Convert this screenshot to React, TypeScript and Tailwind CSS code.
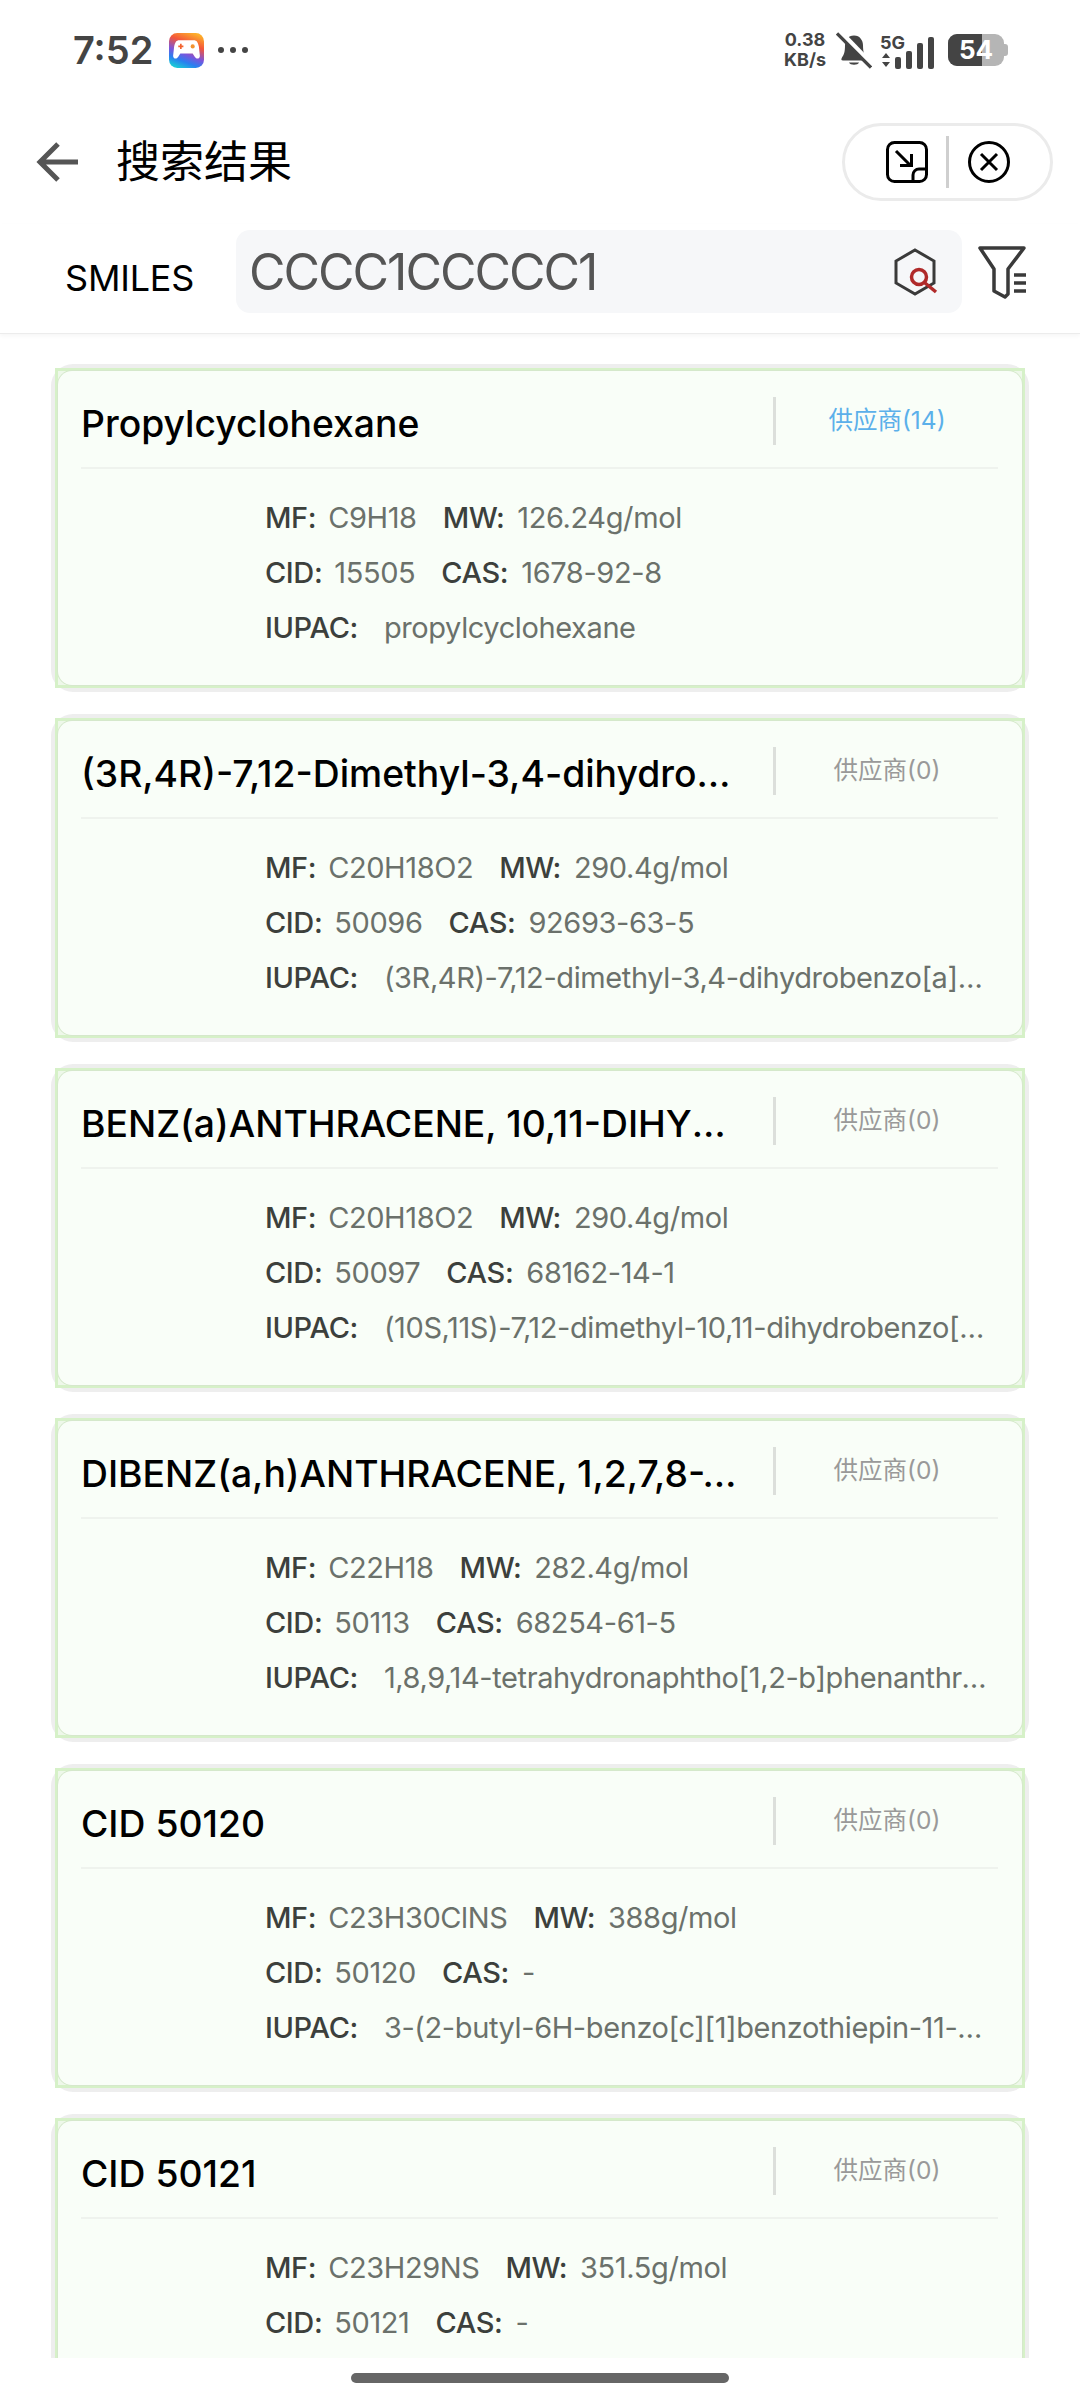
const FONT = "font-['Inter','Noto_Sans_CJK_SC',sans-serif]";

type Compound = {
  name: string;
  suppliers: number;
  mf: string;
  mw: string;
  cid: string;
  cas: string;
  iupac: string;
};

const compounds: Compound[] = [
  { name: "Propylcyclohexane", suppliers: 14, mf: "C9H18", mw: "126.24g/mol", cid: "15505", cas: "1678-92-8", iupac: "propylcyclohexane" },
  { name: "(3R,4R)-7,12-Dimethyl-3,4-dihydrobenzo[a]anthracene-3,4-diol", suppliers: 0, mf: "C20H18O2", mw: "290.4g/mol", cid: "50096", cas: "92693-63-5", iupac: "(3R,4R)-7,12-dimethyl-3,4-dihydrobenzo[a]anthracene-3,4-diol" },
  { name: "BENZ(a)ANTHRACENE, 10,11-DIHYDRO-7,12-DIMETHYL", suppliers: 0, mf: "C20H18O2", mw: "290.4g/mol", cid: "50097", cas: "68162-14-1", iupac: "(10S,11S)-7,12-dimethyl-10,11-dihydrobenzo[a]anthracene-10,11-diol" },
  { name: "DIBENZ(a,h)ANTHRACENE, 1,2,7,8-TETRAHYDRO", suppliers: 0, mf: "C22H18", mw: "282.4g/mol", cid: "50113", cas: "68254-61-5", iupac: "1,8,9,14-tetrahydronaphtho[1,2-b]phenanthrene-1,2-diol" },
  { name: "CID 50120", suppliers: 0, mf: "C23H30ClNS", mw: "388g/mol", cid: "50120", cas: "-", iupac: "3-(2-butyl-6H-benzo[c][1]benzothiepin-11-ylidene)propan-1-amine" },
  { name: "CID 50121", suppliers: 0, mf: "C23H29NS", mw: "351.5g/mol", cid: "50121", cas: "-", iupac: "3-(2-butyl-6H-benzo[c][1]benzothiepin-11-yl)propan-1-amine" },
];

function StatusBar() {
  return (
    <div className="flex h-[100px] items-center justify-between pl-[73px] pr-[72px] text-[#444]">
      <div className="flex items-center">
        <span className="text-[38px] font-semibold leading-none">7:52</span>
        <svg viewBox="0 0 34 34" className="ml-[16px] h-[35px] w-[35px]">
          <defs>
            <linearGradient id="game" x1="0.7" y1="0" x2="0.3" y2="1">
              <stop offset="0" stopColor="#fdae2a" />
              <stop offset="0.3" stopColor="#f4563a" />
              <stop offset="0.6" stopColor="#7a55dc" />
              <stop offset="0.8" stopColor="#2a7ff0" />
              <stop offset="1" stopColor="#1cc6d8" />
            </linearGradient>
          </defs>
          <rect width="34" height="34" rx="8" fill="url(#game)" />
          <path d="M10 7h14c3 0 4 2 5 6l1 9c0 3-3 4-5 1l-2-3H11l-2 3c-2 3-5 2-5-1l1-9c1-4 2-6 5-6z" fill="#fff" />
          <path d="M9 13h5M11.500 10.500v5" stroke="#f2622e" strokeWidth="1.600" />
          <circle cx="23" cy="13" r="2" fill="#f2922e" />
        </svg>
        <div className="ml-[14px] flex gap-[6px]">
          <span className="h-[6px] w-[6px] rounded-full bg-[#444]" />
          <span className="h-[6px] w-[6px] rounded-full bg-[#444]" />
          <span className="h-[6px] w-[6px] rounded-full bg-[#444]" />
        </div>
      </div>
      <div className="flex items-center">
        <div className="flex flex-col items-center text-[18px] font-bold leading-[20px]">
          <span>0.38</span>
          <span>KB/s</span>
        </div>
        <svg viewBox="0 0 36 36" className="ml-[10px] h-[37px] w-[36px]">
          <path d="M18 3c-6 0-9 5-9 10 0 6-1 9-3 12-1 2-1 3 1 3h22c2 0 2-1 1-3-2-3-3-6-3-12 0-5-3-10-9-10z" fill="#444" />
          <path d="M13 30c1 3 9 3 10 0z" fill="#444" />
          <path d="M4 -1l33 34" stroke="#fff" strokeWidth="5" />
          <path d="M1 1l34 34" stroke="#444" strokeWidth="3.200" />
        </svg>
        <div className="ml-[8px] flex w-[25px] flex-col items-start">
          <span className="text-[18px] font-bold leading-[20px]">5G</span>
          <svg viewBox="0 0 10 14" className="ml-[1px] h-[14px] w-[10px]">
            <path d="M5 0l4 5H1zM5 14L1 9h8z" fill="#444" />
          </svg>
        </div>
        <div className="ml-[-10px] flex items-end gap-[5px] self-end pb-[1px]">
          <span className="h-[12px] w-[6px] rounded-[2px] bg-[#444]" />
          <span className="h-[18px] w-[6px] rounded-[2px] bg-[#444]" />
          <span className="h-[26px] w-[6px] rounded-[2px] bg-[#444]" />
          <span className="h-[32px] w-[6px] rounded-[2px] bg-[#444]" />
        </div>
        <div className="relative ml-[14px] h-[32px] w-[56px] overflow-hidden rounded-[9px] bg-[#b5b5b5]">
          <div className="h-full w-[34px] bg-[#444]" />
          <span className="absolute inset-0 flex items-center justify-center text-[26px] font-bold leading-none text-white">54</span>
        </div>
        <span className="h-[12px] w-[4px] rounded-r-[3px] bg-[#b5b5b5]" />
      </div>
    </div>
  );
}

function NavBar() {
  return (
    <div className="flex h-[124px] items-center justify-between pl-[36px] pr-[27px]">
      <div className="flex items-center">
        <svg viewBox="0 0 42 42" className="h-[42px] w-[42px]" fill="none" stroke="#555" strokeWidth="5">
          <path d="M42 21H4M22 3L4 21l18 18" />
        </svg>
        <h1 className="ml-[38px] text-[44px] font-normal leading-none text-black">搜索结果</h1>
      </div>
      <div className="flex h-[78px] w-[211px] items-center rounded-full border-[3px] border-[#ebebeb] pl-[41px]">
        <svg viewBox="0 0 42 42" className="h-[42px] w-[42px]" fill="none" stroke="#000" strokeWidth="3">
          <rect x="1.500" y="1.500" width="39" height="39" rx="7" />
          <path d="M10 10l15 15M14 24.500h11.500V13" />
          <path d="M27 40v-6a6 6 0 0 1 6-6h7.500" />
        </svg>
        <span className="ml-[18px] h-[52px] w-[3px] bg-[#cfcfcf]" />
        <svg viewBox="0 0 42 42" className="ml-[19px] h-[42px] w-[42px]" fill="none" stroke="#000" strokeWidth="3">
          <circle cx="21" cy="21" r="19.500" />
          <path d="M13 13l16 16M29 13L13 29" />
        </svg>
      </div>
    </div>
  );
}

function SearchRow() {
  return (
    <div className="flex h-[110px] items-start border-b border-[#ececec] pl-[65px] pt-[6px] shadow-[0_2px_4px_rgba(0,0,0,0.04)]">
      <span className="mt-[26px] w-[171px] text-[36px] leading-[44px] tracking-[-0.2px] text-black">SMILES</span>
      <div className="flex h-[83px] w-[726px] items-center justify-between rounded-[14px] bg-[#f6f7f9] pl-[13px] pr-[24px]">
        <span className="text-[50px] leading-none tracking-[-2px] text-[#555]">CCCC1CCCCC1</span>
        <svg viewBox="0 0 44 48" className="h-[48px] w-[44px]" fill="none">
          <path d="M21 2l19 11v22L21 46 2 35V13z" stroke="#3a3a3a" strokeWidth="3" />
          <circle cx="25" cy="29" r="7.500" stroke="#b02a2a" strokeWidth="3.500" />
          <path d="M31 35l11 9" stroke="#b02a2a" strokeWidth="3.500" />
        </svg>
      </div>
      <svg viewBox="0 0 50 54" className="ml-[15px] mt-[16px] h-[54px] w-[50px]" fill="none" stroke="#3a3a3a" strokeWidth="3.500">
        <path d="M3 2h44L31 23v25l-3 3-11-6V23z" strokeLinejoin="round" />
        <path d="M37 29h12M37 37h12M37 45h12" />
      </svg>
    </div>
  );
}

function CompoundCard({ item }: { item: Compound }) {
  const hasSuppliers = item.suppliers > 0;
  return (
    <div className="h-[320px] w-[970px] shrink-0 rounded-[18px] shadow-[0_0_0_4px_#eeeeee]">
      <div className="h-full border-[3px] border-[#d6f1c8] bg-[#eef8ea]">
        <div className="flex h-full flex-col rounded-[14px] bg-[#f9fef8] pl-[23px] pr-[24px] shadow-[0_0_0_1px_#d5e8cb]">
          <div className="flex h-[98px] shrink-0 items-start border-b-2 border-[#eff3ee]">
            <h2 className="mt-[28px] w-[664px] truncate text-[37.300px] font-medium leading-[50px] text-black">{item.name}</h2>
            <span className="ml-[28px] mt-[26px] h-[48px] w-[3px] bg-[#dcdfdb]" />
            <span className={`mt-[33px] flex-1 text-center text-[24.500px] leading-[32px] ${hasSuppliers ? "text-[#5bb0ea]" : "text-[#999]"}`}>
              供应商({item.suppliers})
            </span>
          </div>
          <div className="flex flex-col pl-[184px] pr-[10px] pt-[21px] text-[29px] leading-[55px] tracking-[-0.4px] text-[#6b716b]">
            <div className="flex">
              <b className="font-medium text-[#3c403c]">MF:</b>
              <span className="ml-[12px]">{item.mf}</span>
              <b className="ml-[26px] font-medium text-[#3c403c]">MW:</b>
              <span className="ml-[13px]">{item.mw}</span>
            </div>
            <div className="flex">
              <b className="font-medium text-[#3c403c]">CID:</b>
              <span className="ml-[12px]">{item.cid}</span>
              <b className="ml-[26px] font-medium text-[#3c403c]">CAS:</b>
              <span className="ml-[13px]">{item.cas}</span>
            </div>
            <div className="flex">
              <b className="font-medium text-[#3c403c]">IUPAC:</b>
              <span className="ml-[26px] truncate">{item.iupac}</span>
            </div>
          </div>
        </div>
      </div>
    </div>
  );
}

export default function App() {
  return (
    <div className={`flex h-[2400px] w-[1080px] flex-col overflow-hidden bg-white ${FONT}`}>
      <StatusBar />
      <NavBar />
      <SearchRow />
      <main className="flex h-[2024px] flex-col items-center gap-[30px] overflow-hidden pt-[34px]">
        {compounds.map((c) => (
          <CompoundCard key={c.cid} item={c} />
        ))}
      </main>
      <div className="flex flex-1 items-start justify-center pt-[15px]">
        <span className="h-[10px] w-[378px] rounded-full bg-[#666]" />
      </div>
    </div>
  );
}
